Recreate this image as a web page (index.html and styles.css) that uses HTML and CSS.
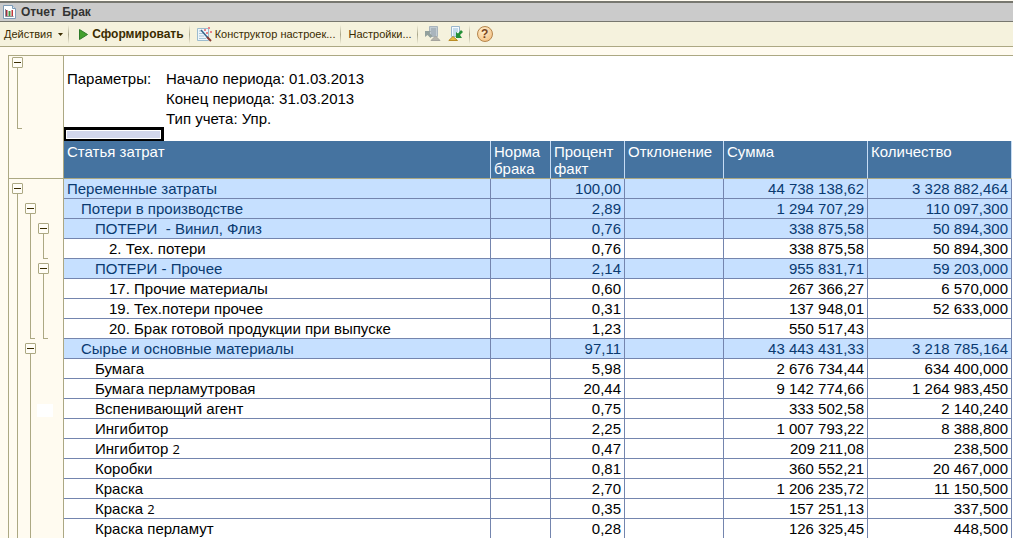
FILE: index.html
```html
<!DOCTYPE html>
<html lang="ru">
<head>
<meta charset="utf-8">
<title>Отчет Брак</title>
<link rel="stylesheet" href="styles.css">
</head>
<body>
<header class="titlebar">
  <svg class="title-icon" width="13" height="14" viewBox="0 0 13 14">
    <path d="M.5 .5h9L12.500 3.500V13.500H.5z" fill="#fff" stroke="#7d9bb5"/>
    <path d="M9.500 .5v3h3" fill="#d9e2ec" stroke="#7d9bb5"/>
    <path d="M2.500 4v7.500h8" fill="none" stroke="#8a9099"/>
    <path d="M3 5h1.500v6H3z" fill="#a03040"/><path d="M5.500 6h2v5h-2z" fill="#3f9440"/><path d="M8.500 5h1.500v6H8.500z" fill="#c03a3a"/>
  </svg>
  <h1 class="title">Отчет&nbsp; Брак</h1>
</header>
<nav class="toolbar">
  <button class="tool actions">Действия
    <svg width="5" height="3" viewBox="0 0 5 3"><path d="M0 0h5L2.500 3z" fill="#3a2c00"/></svg>
  </button>
  <span class="separator"></span>
  <button class="tool run">
    <svg width="9" height="11" viewBox="0 0 9 11"><path d="M.5 .5L8.500 5.500L.5 10.500z" fill="#43a02c" stroke="#2d7a28"/></svg>
    Сформировать</button>
  <span class="separator"></span>
  <button class="tool builder">
    <svg width="15" height="15" viewBox="0 0 15 15">
      <path d="M.5 1.500h11v12H.5z" fill="#eef6fb" stroke="#9dbccf"/>
      <path d="M2 4h3M2 6.500h4M2 9h5M2 11.500h7" stroke="#a9c6d8"/>
      <path d="M4 3l7 8" stroke="#34658a" stroke-width="1.500"/><path d="M10 10l4 4" stroke="#8a3c34" stroke-width="2"/>
      <path d="M7 2h2v2H7zM11 0h2v2h-2zM9 5h2v2H9zM13 4h2v2h-2z" fill="#e8858a"/>
    </svg>
    Конструктор настроек...</button>
  <span class="separator"></span>
  <button class="tool settings">Настройки...</button>
  <span class="separator"></span>
  <button class="tool" aria-label="Восстановить настройки" disabled>
    <svg width="16" height="16" viewBox="0 0 16 16">
      <path d="M4.500 .5h8v10h-8z" fill="#c3cdd3" stroke="#a9b4bc"/><path d="M6 3h5M6 5h5M6 7h5M6 9h5" stroke="#8f9ca6"/>
      <path d="M0 5h6L4.500 7l3 3-2 2-3-3L0 11z" fill="#93a19d"/><path d="M6 14.500l4.500-4.500L15 14.500z" fill="#b5b4ac" stroke="#a5a49e"/>
    </svg>
  </button>
  <button class="tool save" aria-label="Сохранить настройки">
    <svg width="16" height="16" viewBox="0 0 16 16">
      <path d="M3.500 .5h8v10h-8z" fill="#f5faff" stroke="#9ab6cb"/><path d="M5 3h5M5 5h5M5 7h4M5 9h3" stroke="#92bdd8"/>
      <path d="M13 4l2 2-3 3 2 3H8V6l2 1.500z" fill="#249038"/><path d="M.8 14.500l4.200-4 4.500 4z" fill="#e8bd45" stroke="#b98b25"/>
    </svg>
  </button>
  <span class="separator"></span>
  <button class="tool help" aria-label="Справка">?</button>
</nav>

<main class="report">
  <aside class="gutter">
    <div class="tree head-tree">
      <div class="group g-params"><button class="toggle" aria-label="Свернуть параметры"></button><i class="line"></i></div>
    </div>
    <div class="tree body-tree">
      <div class="group g-total open"><button class="toggle" aria-label="Свернуть переменные затраты"></button><i class="line"></i></div>
      <div class="group g-loss"><button class="toggle" aria-label="Свернуть потери в производстве"></button><i class="line"></i></div>
      <div class="group g-vinyl"><button class="toggle" aria-label="Свернуть винил, флиз"></button><i class="line"></i></div>
      <div class="group g-other"><button class="toggle" aria-label="Свернуть прочее"></button><i class="line"></i></div>
      <div class="group g-raw open"><button class="toggle" aria-label="Свернуть сырье"></button><i class="line"></i></div>
      <span class="blank"></span>
    </div>
  </aside>
  <section class="sheet">
    <div class="params">
      <span>Параметры:</span>
      <div>
        <p>Начало периода: 01.03.2013</p>
        <p>Конец периода: 31.03.2013</p>
        <p>Тип учета: Упр.</p>
      </div>
    </div>
    <div class="selected-cell"></div>
    <table class="costs">
      <colgroup><col><col class="c-norm"><col class="c-percent"><col class="c-dev"><col class="c-sum"><col class="c-sum"></colgroup>
      <thead><tr><th>Статья затрат</th><th>Норма брака</th><th>Процент факт</th><th>Отклонение</th><th>Сумма</th><th>Количество</th></tr></thead>
      <tbody>
        <tr class="sub"><td>Переменные затраты</td><td></td><td>100,00</td><td></td><td>44 738 138,62</td><td>3 328 882,464</td></tr>
        <tr class="sub"><td class="l1">Потери в производстве</td><td></td><td>2,89</td><td></td><td>1 294 707,29</td><td>110 097,300</td></tr>
        <tr class="sub"><td class="l2">ПОТЕРИ&nbsp; - Винил, Флиз</td><td></td><td>0,76</td><td></td><td>338 875,58</td><td>50 894,300</td></tr>
        <tr><td class="l3">2. Тех. потери</td><td></td><td>0,76</td><td></td><td>338 875,58</td><td>50 894,300</td></tr>
        <tr class="sub"><td class="l2">ПОТЕРИ - Прочее</td><td></td><td>2,14</td><td></td><td>955 831,71</td><td>59 203,000</td></tr>
        <tr><td class="l3">17. Прочие материалы</td><td></td><td>0,60</td><td></td><td>267 366,27</td><td>6 570,000</td></tr>
        <tr><td class="l3">19. Тех.потери прочее</td><td></td><td>0,31</td><td></td><td>137 948,01</td><td>52 633,000</td></tr>
        <tr><td class="l3">20. Брак готовой продукции при выпуске</td><td></td><td>1,23</td><td></td><td>550 517,43</td><td></td></tr>
        <tr class="sub"><td class="l1">Сырье и основные материалы</td><td></td><td>97,11</td><td></td><td>43 443 431,33</td><td>3 218 785,164</td></tr>
        <tr><td class="l2">Бумага</td><td></td><td>5,98</td><td></td><td>2 676 734,44</td><td>634 400,000</td></tr>
        <tr><td class="l2">Бумага перламутровая</td><td></td><td>20,44</td><td></td><td>9 142 774,66</td><td>1 264 983,450</td></tr>
        <tr><td class="l2">Вспенивающий агент</td><td></td><td>0,75</td><td></td><td>333 502,58</td><td>2 140,240</td></tr>
        <tr><td class="l2">Ингибитор</td><td></td><td>2,25</td><td></td><td>1 007 793,22</td><td>8 388,800</td></tr>
        <tr><td class="l2">Ингибитор <span class="num">2</span></td><td></td><td>0,47</td><td></td><td>209 211,08</td><td>238,500</td></tr>
        <tr><td class="l2">Коробки</td><td></td><td>0,81</td><td></td><td>360 552,21</td><td>20 467,000</td></tr>
        <tr><td class="l2">Краска</td><td></td><td>2,70</td><td></td><td>1 206 235,72</td><td>11 150,500</td></tr>
        <tr><td class="l2">Краска <span class="num">2</span></td><td></td><td>0,35</td><td></td><td>157 251,13</td><td>337,500</td></tr>
        <tr><td class="l2">Краска перламут</td><td></td><td>0,28</td><td></td><td>126 325,45</td><td>448,500</td></tr>
      </tbody>
    </table>
  </section>
</main>
</body>
</html>
```
FILE: styles.css
```css
* { box-sizing: border-box; }
body {
  margin: 0;
  height: 100vh;
  overflow: hidden;
  display: flex;
  flex-direction: column;
  background: #fffbf0;
  font-family: "Liberation Sans", Arial, sans-serif;
  color: #000;
}
.titlebar {
  flex: none;
  display: flex;
  align-items: center;
  gap: 5px;
  height: 21px;
  margin-top: 1px;
  padding-left: 3px;
  background: #cbcbcb;
  border-top: 2px solid #77776f;
  border-bottom: 1px solid #77776f;
}
.title { margin: 0; font-size: 12px; line-height: 16px; color: #333; }
.toolbar {
  flex: none;
  display: flex;
  align-items: center;
  height: 25px;
  padding-left: 4px;
  background: #f5f2dd;
  border-bottom: 1px solid #aca883;
}
.tool {
  display: flex;
  align-items: center;
  padding: 0;
  border: 0;
  background: none;
  font: 11px/16px "Liberation Sans", Arial, sans-serif;
  color: #3a2c00;
  white-space: nowrap;
}
.actions { gap: 6px; }
.run { gap: 4px; padding-left: 3px; font-size: 12px; font-weight: bold; }
.builder { gap: 3px; }
.save { margin-left: 7px; }
.separator {
  width: 1px;
  height: 19px;
  margin: 0 7px 0 5px;
  background: linear-gradient(#f5f2dd, #aaa78c, #f5f2dd);
}
.help {
  justify-content: center;
  width: 16px;
  height: 16px;
  border: 1px solid #b5854c;
  border-radius: 50%;
  background: radial-gradient(circle at 40% 30%, #fff0d0, #f2b873);
  font-size: 12px;
  font-weight: bold;
  color: #7a4520;
}
.report {
  flex: 1;
  min-height: 0;
  display: flex;
  margin: 8px 0 0 8px;
  border-top: 1px solid #aca883;
  border-left: 1px solid #aca883;
}
.gutter {
  flex: none;
  width: 55px;
  border-right: 1px solid #aca883;
}
.tree {
  display: grid;
  grid-template-columns: repeat(3, 13px);
  grid-auto-rows: 20px;
  padding-left: 3px;
}
.head-tree {
  height: 123px;
  grid-template-rows: 73px;
  border-bottom: 1px solid #aca883;
}
.body-tree { grid-template-rows: repeat(18, 20px); }
.group { display: flex; flex-direction: column; padding-top: 4px; }
.g-params { padding-top: 1px; }
.g-total { grid-area: 1 / 1 / 19 / 2; }
.g-loss { grid-area: 2 / 2 / 9 / 3; }
.g-vinyl { grid-area: 3 / 3 / 5 / 4; }
.g-other { grid-area: 5 / 3 / 9 / 4; }
.g-raw { grid-area: 9 / 2 / 19 / 3; }
.toggle {
  display: flex;
  align-items: center;
  justify-content: center;
  width: 11px;
  height: 11px;
  padding: 0;
  border: 1px solid #aca883;
  border-radius: 1px;
  background: #fffdf6;
}
.toggle::before { content: ""; width: 7px; height: 1px; background: #3a2c00; }
.line {
  flex: 1;
  width: 5px;
  margin-left: 5px;
  border-left: 1px solid #aca883;
  border-bottom: 1px solid #aca883;
}
.open .line { border-bottom: 0; }
.blank { grid-area: 12 / 3 / 13 / 4; width: 16px; height: 13px; margin-top: 5px; background: #fff; justify-self: center; }
.sheet { flex: 1; min-width: 0; background: #fff; font-size: 15px; line-height: 20px; }
.params { display: grid; grid-template-columns: 99px 1fr; padding: 13px 0 0 3px; }
.params p { margin: 0; }
.selected-cell {
  width: 100px;
  height: 14px;
  margin-top: -2px;
  border: solid #000;
  border-width: 3px 3px 2px 2px;
  background: #d2d7ec;
  box-shadow: inset 0 0 0 1px #fff;
}
.costs {
  width: calc(100% - 1px);
  table-layout: fixed;
  border-collapse: separate;
  border-spacing: 0;
}
.c-norm { width: 60px; }
.c-percent { width: 74px; }
.c-dev { width: 99px; }
.c-sum { width: 144px; }
.costs th {
  height: 38px;
  padding: 2px 3px 1px;
  background: #4573a0;
  border-right: 1px solid #c6dcf4;
  border-bottom: 1px solid #aca883;
  color: #fff;
  font-weight: normal;
  line-height: 17px;
  text-align: left;
  vertical-align: top;
}
.costs td {
  height: 20px;
  padding: 0 3px;
  border-right: 1px solid #7485ae;
  border-bottom: 1px solid #7485ae;
  line-height: 19px;
  text-align: right;
  white-space: nowrap;
}
.costs td:first-child { text-align: left; }
.costs .sub td { background: #c6e0ff; color: #0a3a70; }
.costs .l1 { padding-left: 17px; }
.costs .l2 { padding-left: 31px; }
.costs .l3 { padding-left: 45px; }
.num { font-family: "Open Sans", sans-serif; font-size: 13px; line-height: 16px; }
```
